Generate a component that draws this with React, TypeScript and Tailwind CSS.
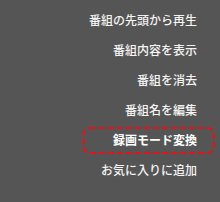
const items = [
  '番組の先頭から再生',
  '番組内容を表示',
  '番組を消去',
  '番組名を編集',
  '録画モード変換',
  'お気に入りに追加',
];

export default function App() {
  return (
    <div
      className="w-[220px] h-[202px] bg-[#555555] pt-[5px] flex flex-col items-end"
      style={{ fontFamily: '"Noto Sans CJK JP", "Noto Sans", sans-serif' }}
    >
      {items.map((label, i) =>
        i === 4 ? (
          <div key={label} className="h-[30px] flex items-center pr-[5px]">
            <div className="relative w-[132px] h-[27px] flex items-center justify-end pr-[18px]">
              {/* dashed highlight frame */}
              <svg className="absolute inset-0" width="132" height="27" viewBox="0 0 132 27" fill="none">
                <rect
                  x="1"
                  y="1"
                  width="130"
                  height="25"
                  rx="6"
                  stroke="#e8101a"
                  strokeWidth="2"
                  strokeDasharray="6 3"
                />
              </svg>
              <span className="relative text-[12px] leading-none font-bold text-white">{label}</span>
            </div>
          </div>
        ) : (
          <div key={label} className="h-[30px] flex items-center pr-[23px]">
            <span className="text-[12px] leading-none font-medium text-[#f4f4f4]">{label}</span>
          </div>
        )
      )}
    </div>
  );
}
